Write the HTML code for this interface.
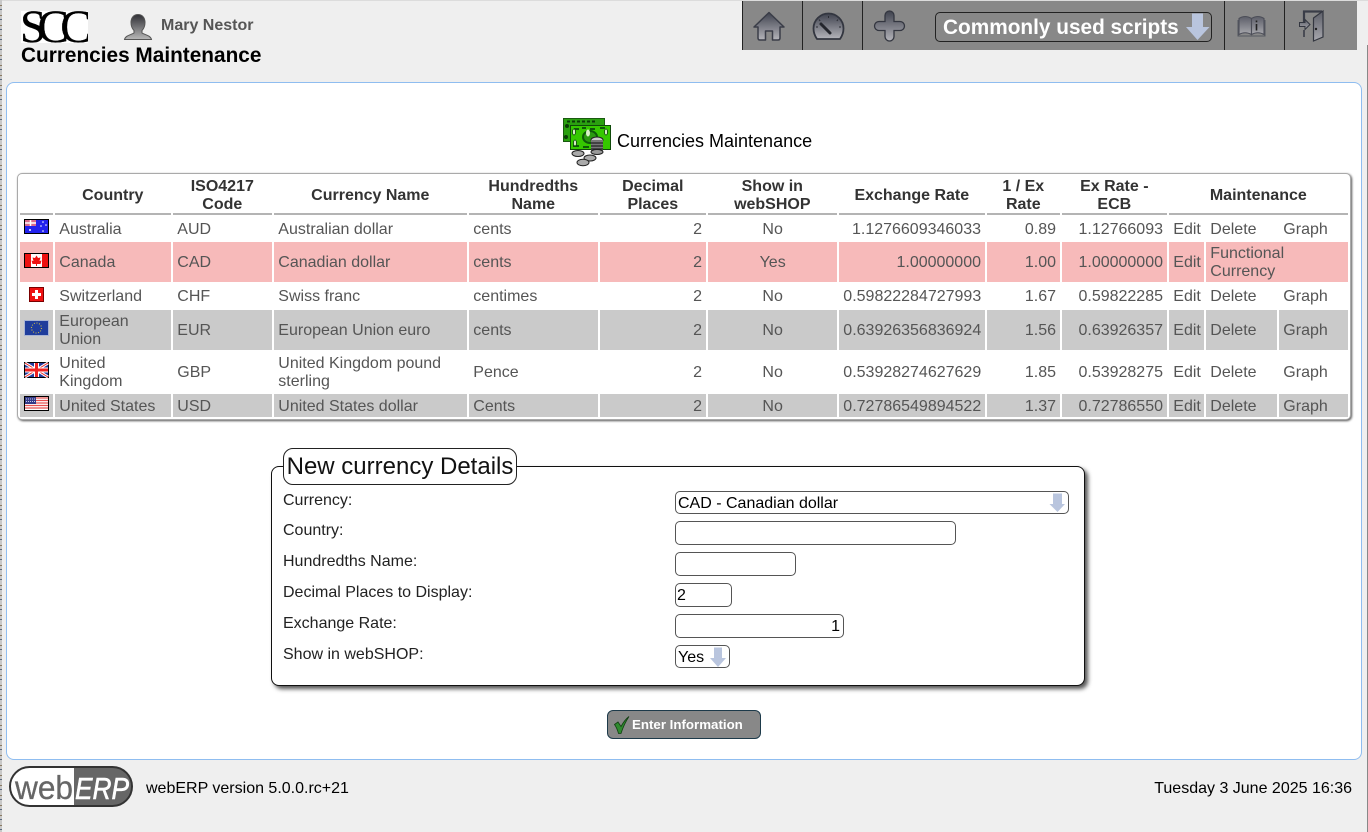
<!DOCTYPE html>
<html lang="en">
<head>
<meta charset="utf-8">
<title>Currencies Maintenance</title>
<style>
html,body{margin:0;padding:0;width:1368px;height:832px;overflow:hidden;background:#efefef;font-family:"Liberation Sans",Arial,sans-serif;color:#000}
body{position:relative}
.abs{position:absolute;white-space:nowrap}
#topline{left:0;top:0;width:1368px;height:1px;background:#dcdcdc}
#edge{left:0;top:0;width:2px;height:832px;background:repeating-linear-gradient(180deg,#c8c8c8 0 5px,#8a7a60 5px 6px,#c8c8c8 6px 9px,#5a6a80 9px 10px)}
#edge2{left:1367px;top:45px;width:1px;height:787px;background:#888}
#logo{left:21px;top:11px;width:67px;height:32px;background:#fff;overflow:hidden;font-family:"Liberation Serif",serif;font-size:47px;line-height:32px;letter-spacing:-8.6px;color:#000;-webkit-text-stroke:.3px #000}
#logo span{position:relative;left:-1px;top:0}
#user{left:161px;top:17px;font-size:16px;font-weight:bold;line-height:18px;color:#555}
#ptitle{left:21px;top:44px;font-size:20.8px;font-weight:bold;line-height:24px;color:#000}
#bar{left:742px;top:1px;width:615px;height:49px;background:#888}
.sep{position:absolute;top:0;width:1px;height:49px;background:#222}
#scripts{left:935px;top:12px;width:275px;height:28px;border:1px solid #222;border-radius:5px;font-size:20.8px;font-weight:bold;color:#fff;line-height:30px;text-indent:7px}
#main{left:6px;top:82px;width:1354px;height:676px;background:#fff;border:1px solid #8fbdf0;border-radius:8px}
#mtitle{left:617px;top:131px;font-size:18px;line-height:21px;color:#000}
#tbox{left:17px;top:173px;width:1332px;height:245px;border:1px solid #aaa;border-radius:5px;box-shadow:1px 1px 2px #555;background:#fff}
table{position:absolute;left:0;top:0;border-collapse:separate;border-spacing:2px;table-layout:fixed;width:1332px;font-size:16px;line-height:18px;color:#555}
th,td{padding:2px 4px 0 4.3px;vertical-align:middle;overflow:hidden;box-sizing:border-box}
th{color:#333;font-weight:bold;border-bottom:2px solid #b4b4b4;text-align:center;height:39px;padding:1px 4px 0 3.6px}
th span{position:relative;top:1px}
td.r{text-align:right}
td.c{text-align:center}
td.f{padding:0;position:relative}
tr.p td{background:#f7baba}
tr.g td{background:#cacaca}
.h23{height:23px}.h24{height:24px}.h40{height:40px}
#fs{left:271px;top:466px;width:812px;height:218px;border:1px solid #111;border-radius:8px;background:#fff;box-shadow:3px 3px 4px #555}
#legend{left:283px;top:448px;width:232px;height:35px;border:1px solid #222;border-radius:10px;background:#fff;font-size:24px;line-height:35px;text-align:center;color:#111}
.lab{left:283px;font-size:16px;line-height:18px;color:#222}
.in{left:675px;box-sizing:border-box;border:1px solid #555;border-radius:5px;background:#fff;font-size:16px;line-height:23px;padding:0 3px 0 1px;color:#000}
.sel{padding-left:2px}
#btn{left:607px;top:710px;width:152px;height:27px;background:#888;border:1px solid #1d3a4a;border-radius:6px;color:#fff;font-size:13.3px;font-weight:bold;line-height:27px;text-indent:24px}
#ver{left:146px;top:780px;font-size:16px;line-height:18px;color:#000}
#date{right:16px;top:780px;font-size:16px;line-height:18px;color:#000}
svg.layer{position:absolute;left:0;top:0;pointer-events:none}
</style>
</head>
<body>
<div class="abs" id="topline"></div>
<div class="abs" id="edge"></div>
<div class="abs" id="edge2"></div>
<div class="abs" id="logo"><span>SCC</span></div>
<div class="abs" id="user">Mary Nestor</div>
<div class="abs" id="ptitle">Currencies Maintenance</div>
<div class="abs" id="bar">
<div class="sep" style="left:0"></div><div class="sep" style="left:60px"></div><div class="sep" style="left:120px"></div><div class="sep" style="left:482px"></div><div class="sep" style="left:542px"></div>
</div>
<div class="abs" id="scripts">Commonly used scripts</div>
<div class="abs" id="main"></div>
<div class="abs" id="mtitle">Currencies Maintenance</div>

<div class="abs" id="tbox">
<table>
<colgroup><col style="width:33px"><col style="width:116px"><col style="width:99px"><col style="width:193px"><col style="width:129px"><col style="width:106px"><col style="width:129px"><col style="width:146px"><col style="width:73px"><col style="width:105px"><col style="width:35px"><col style="width:71px"><col style="width:69px"></colgroup>
<tr><th></th><th><span>Country</span></th><th><span>ISO4217<br>Code</span></th><th><span>Currency Name</span></th><th><span>Hundredths<br>Name</span></th><th><span>Decimal<br>Places</span></th><th><span>Show in<br>webSHOP</span></th><th><span>Exchange Rate</span></th><th><span>1 / Ex<br>Rate</span></th><th><span>Ex Rate -<br>ECB</span></th><th colspan="3"><span>Maintenance</span></th></tr>
<tr class="h23"><td class="f h23"></td><td>Australia</td><td>AUD</td><td>Australian dollar</td><td>cents</td><td class="r">2</td><td class="c">No</td><td class="r">1.1276609346033</td><td class="r">0.89</td><td class="r">1.12766093</td><td>Edit</td><td>Delete</td><td>Graph</td></tr>
<tr class="p h40"><td class="f h40"></td><td>Canada</td><td>CAD</td><td>Canadian dollar</td><td>cents</td><td class="r">2</td><td class="c">Yes</td><td class="r">1.00000000</td><td class="r">1.00</td><td class="r">1.00000000</td><td>Edit</td><td colspan="2">Functional<br>Currency</td></tr>
<tr class="h24"><td class="f h24"></td><td>Switzerland</td><td>CHF</td><td>Swiss franc</td><td>centimes</td><td class="r">2</td><td class="c">No</td><td class="r">0.59822284727993</td><td class="r">1.67</td><td class="r">0.59822285</td><td>Edit</td><td>Delete</td><td>Graph</td></tr>
<tr class="g h40"><td class="f h40"></td><td>European<br>Union</td><td>EUR</td><td>European Union euro</td><td>cents</td><td class="r">2</td><td class="c">No</td><td class="r">0.63926356836924</td><td class="r">1.56</td><td class="r">0.63926357</td><td>Edit</td><td>Delete</td><td>Graph</td></tr>
<tr class="h40"><td class="f h40"></td><td>United<br>Kingdom</td><td>GBP</td><td>United Kingdom pound<br>sterling</td><td>Pence</td><td class="r">2</td><td class="c">No</td><td class="r">0.53928274627629</td><td class="r">1.85</td><td class="r">0.53928275</td><td>Edit</td><td>Delete</td><td>Graph</td></tr>
<tr class="g h23"><td class="f h23"></td><td>United States</td><td>USD</td><td>United States dollar</td><td>Cents</td><td class="r">2</td><td class="c">No</td><td class="r">0.72786549894522</td><td class="r">1.37</td><td class="r">0.72786550</td><td>Edit</td><td>Delete</td><td>Graph</td></tr>
</table>
</div>

<div class="abs" id="fs"></div>
<div class="abs" id="legend">New currency Details</div>
<div class="abs lab" style="top:492px">Currency:</div>
<div class="abs lab" style="top:522px">Country:</div>
<div class="abs lab" style="top:553px">Hundredths Name:</div>
<div class="abs lab" style="top:584px">Decimal Places to Display:</div>
<div class="abs lab" style="top:615px">Exchange Rate:</div>
<div class="abs lab" style="top:646px">Show in webSHOP:</div>
<div class="abs in sel" style="top:491px;width:394px;height:23px">CAD - Canadian dollar</div>
<div class="abs in" style="top:521px;width:281px;height:24px"></div>
<div class="abs in" style="top:552px;width:121px;height:24px"></div>
<div class="abs in" style="top:583px;width:57px;height:24px">2</div>
<div class="abs in" style="top:614px;width:169px;height:24px;text-align:right">1</div>
<div class="abs in sel" style="top:645px;width:55px;height:23px">Yes</div>
<div class="abs" id="btn">Enter Information</div>
<div class="abs" id="ver">webERP version 5.0.0.rc+21</div>
<div class="abs" id="date">Tuesday 3 June 2025 16:36</div>

<svg class="layer" width="1368" height="832" viewBox="0 0 1368 832">
<defs>
<linearGradient id="g" x1="0" y1="0" x2="0" y2="1"><stop offset="0" stop-color="#3f424e"/><stop offset="1" stop-color="#b4b4ba"/></linearGradient>
<linearGradient id="gb" x1="0" y1="0" x2="0" y2="1"><stop offset="0" stop-color="#5c5e68"/><stop offset="1" stop-color="#a8a8ae"/></linearGradient>
<linearGradient id="gp" x1="0" y1="0" x2="0" y2="1"><stop offset="0" stop-color="#2e2e34"/><stop offset="1" stop-color="#b8b8b8"/></linearGradient>
</defs>
<!-- person -->
<path d="M138 14.500c-4.500 0-7 3.500-7 8 0 3.500 1.500 6.500 3 8v2.500c-3 1.700-8.500 2.500-9.500 6.500h27c-1-4-6.500-4.800-9.500-6.500v-2.500c1.500-1.500 3-4.500 3-8 0-4.500-2.500-8-7-8z" fill="url(#gp)" stroke="#555" stroke-width="1"/>
<!-- home -->
<path d="M769 12.500L784 27H780V38Q780 40 778 40H772.500V31H765.500V40H760Q758 40 758 38V27H754Z" fill="url(#g)" stroke="#3a3d48" stroke-width="1.500" stroke-linejoin="round"/>
<!-- gauge -->
<path d="M817 39Q813.500 34 813.500 28.500A15 15 0 0 1 843.500 28.500Q843.500 34 840 39Z" fill="url(#g)" stroke="#333640" stroke-width="1.800" stroke-linejoin="round"/>
<path d="M821 24L830 33" stroke="#24262d" stroke-width="3" stroke-linecap="round"/>
<path d="M828.500 16v2M819 19.500l1.200 1.500M838 19.500l-1.200 1.500M816 27h2M841 27h-2" stroke="#2a2c33" stroke-width="1"/>
<!-- plus -->
<path d="M885 15.500a4.500 4.500 0 0 1 9 0V21.500H900a4.500 4.500 0 0 1 0 9H894V36.500a4.500 4.500 0 0 1-9 0V30.500H879a4.500 4.500 0 0 1 0-9H885Z" fill="url(#g)" stroke="#333640" stroke-width="1.300"/>
<!-- scripts arrow -->
<path d="M1192 13.500H1203V27H1209.500L1197.500 40L1186 27H1192Z" fill="#b9c5de"/>
<!-- book -->
<path d="M1239 18.500Q1245 14.500 1251.500 18.500V34.500Q1245 31 1239 34.500Z" fill="url(#gb)" stroke="#4c4e58" stroke-width="1.100"/>
<path d="M1251.500 18.500Q1258 14.500 1264 18.500V34.500Q1258 31 1251.500 34.500Z" fill="url(#gb)" stroke="#4c4e58" stroke-width="1.100"/>
<path d="M1238 20V36H1265V20" fill="none" stroke="#55575f" stroke-width="1"/>
<path d="M1256.500 20.500v1.800M1256.500 24v6.500" stroke="#222" stroke-width="1.600"/>
<!-- door -->
<path d="M1304 24V11.500H1322" fill="none" stroke="#3a3d48" stroke-width="2.200"/>
<path d="M1313.500 18L1323 11V37L1313.500 41Z" fill="url(#gb)" stroke="#333640" stroke-width="1.200"/>
<circle cx="1316" cy="29" r="1.200" fill="#222"/>
<path d="M1299.500 22.500H1305V19.500L1310 24.500L1305 29.500V26.500H1299.500Z" fill="url(#gb)" stroke="#333640" stroke-width="1"/>
<path d="M1304 30V37" stroke="#4a4c55" stroke-width="2"/>
<!-- currency icon -->
<rect x="563" y="118" width="42" height="24" fill="#1a5a10"/>
<rect x="564" y="119" width="40" height="22" fill="#2aa010"/>
<path d="M567 121.500h3M572 121.500h3M577 121.500h3M582 121.500h3M587 121.500h3M592 121.500h3" stroke="#0a3a08" stroke-width="2"/>
<circle cx="567" cy="126" r="2" fill="#0a3a08"/><circle cx="566" cy="137" r="2" fill="#0a3a08"/>
<rect x="570" y="125" width="41" height="25" fill="#0f4a0a"/>
<rect x="571" y="126" width="39" height="23" fill="#35c800"/>
<path d="M574 129h5M582 128h4M590 129h5M600 128h5M573 146h6M583 147h6" stroke="#0d5a08" stroke-width="2"/>
<ellipse cx="590" cy="137" rx="7" ry="6" fill="#2a9a10" stroke="#0d5a08" stroke-width="2"/>
<ellipse cx="574" cy="132" rx="1.500" ry="3" fill="#d8f0c8" stroke="#0a3a08" stroke-width=".8"/><ellipse cx="575" cy="143" rx="1.500" ry="3" fill="#d8f0c8" stroke="#0a3a08" stroke-width=".8"/><ellipse cx="606" cy="132" rx="1.500" ry="3" fill="#d8f0c8" stroke="#0a3a08" stroke-width=".8"/>
<ellipse cx="588" cy="133" rx="2" ry="3.500" fill="#d8f0c8"/>
<ellipse cx="597" cy="140" rx="6" ry="3" fill="#ccc" stroke="#222"/>
<rect x="591" y="140" width="12" height="12" fill="#777"/>
<path d="M591 143h12M591 146h12M591 149h12" stroke="#222" stroke-width="1.200"/>
<ellipse cx="597" cy="152" rx="6" ry="2.500" fill="#999" stroke="#222"/>
<ellipse cx="578" cy="153.500" rx="6" ry="3" fill="#aaa" stroke="#222"/>
<ellipse cx="590" cy="158" rx="6" ry="3" fill="#aaa" stroke="#222"/>
<ellipse cx="583" cy="162.500" rx="6" ry="3.200" fill="#aaa" stroke="#222"/>
<!-- select arrows -->
<path d="M1053 493.500H1062V504H1065L1057.500 512L1049.500 504H1053Z" fill="#b9c5de"/>
<path d="M714 647.500H722V658H726L718 667L710 658H714Z" fill="#b9c5de"/>
<!-- check -->
<path d="M614.500 724.500L618 722L621 726.500Q624.500 720 629 716.500Q624 724 621 733.500H618.500Q617 728 614.500 724.500Z" fill="#2f8a2f" stroke="#123f12" stroke-width=".8"/>
<!-- webERP logo -->
<path d="M30 767H74V806H30A19.500 19.500 0 0 1 30 767Z" fill="#fff"/>
<path d="M74 767H113A19.500 19.500 0 0 1 113 806H74Z" fill="#666"/>
<rect x="10" y="767" width="122" height="39" rx="19.500" fill="none" stroke="#333" stroke-width="2"/>
<text x="15" y="799" font-family="'Liberation Sans',sans-serif" font-size="33" fill="#666" stroke="#666" stroke-width=".3" textLength="58" lengthAdjust="spacingAndGlyphs">web</text>
<text x="75" y="799" font-family="'Liberation Sans',sans-serif" font-style="italic" font-size="31" fill="#fff" stroke="#fff" stroke-width=".6" textLength="54" lengthAdjust="spacingAndGlyphs">ERP</text>
<!-- flags -->
<g>
<rect x="24.500" y="219.500" width="24" height="14" fill="#2222ee" stroke="#000"/>
<rect x="25" y="220" width="11" height="6" fill="#d86a8a"/>
<path d="M25 223h11M30.500 220v6" stroke="#fff" stroke-width="1.500"/>
<circle cx="30" cy="230" r="1" fill="#fff"/><circle cx="43" cy="222" r=".8" fill="#fff"/><circle cx="46" cy="225" r=".8" fill="#fff"/><circle cx="41" cy="226" r=".8" fill="#fff"/><circle cx="43" cy="231" r=".8" fill="#fff"/>
</g>
<g>
<rect x="24.500" y="253.500" width="24" height="14" fill="#fff" stroke="#000"/>
<rect x="25" y="254" width="6" height="13" fill="#ee1111"/><rect x="42" y="254" width="6" height="13" fill="#ee1111"/>
<path d="M36.500 255.500L38 258L40.500 257.500L39.500 261L41.500 260.500L40.500 264H37V266H36V264H32.500L31.500 260.500L33.500 261L32.500 257.500L35 258Z" fill="#ee1111"/>
</g>
<g>
<rect x="29.500" y="287.500" width="14" height="14" fill="#ee1111" stroke="#7a0000"/>
<path d="M32 294.500h9M36.500 290v9" stroke="#fff" stroke-width="3"/>
</g>
<g>
<rect x="24.500" y="320.500" width="24" height="15" fill="#1f3d9c" stroke="#a8b4d4"/>
<circle cx="36.500" cy="328" r="5" fill="none" stroke="#c8b84a" stroke-width="1.100" stroke-dasharray="1 1.600"/>
</g>
<g>
<rect x="24.500" y="362.500" width="24" height="15" fill="#223a9c" stroke="#000"/>
<path d="M25 363L48 377M48 363L25 377" stroke="#fff" stroke-width="3"/>
<path d="M25 363L48 377M48 363L25 377" stroke="#ee2222" stroke-width="1"/>
<path d="M36.500 363V377M25 370H48" stroke="#fff" stroke-width="5"/>
<path d="M36.500 363V377M25 370H48" stroke="#ee2222" stroke-width="3"/>
</g>
<g>
<rect x="24.500" y="396.500" width="24" height="14" fill="#fff" stroke="#000"/>
<path d="M25 398H48M25 400.500H48M25 403H48M25 405.500H48M25 408H48" stroke="#e85050" stroke-width="1.300"/>
<rect x="25" y="397" width="11" height="7" fill="#333a88"/>
<path d="M26 399h9M26 401.500h9" stroke="#c8c8e8" stroke-width="1" stroke-dasharray="1 1"/>
</g>
</svg>
</body>
</html>
